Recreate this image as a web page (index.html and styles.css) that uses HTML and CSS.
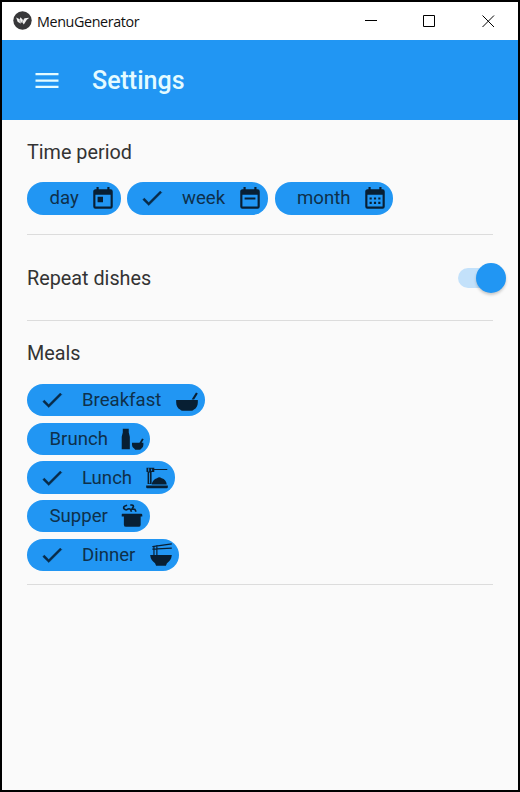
FILE: index.html
```html
<!DOCTYPE html>
<html lang="en">
<head>
<meta charset="utf-8">
<title>MenuGenerator</title>
<link rel="stylesheet" href="styles.css">
</head>
<body>
<svg class="defs" width="0" height="0">
  <symbol id="check" viewBox="0 0 24 24"><path d="M21,7L9,19L3.5,13.5L4.91,12.09L9,16.17L19.59,5.59L21,7Z"/></symbol>
</svg>
<div class="window">
  <div class="titlebar">
    <svg class="logo" viewBox="0 0 19 19"><circle cx="9.5" cy="9.5" r="9.2" fill="#373739"/><path d="M3.2 6.4L6.7 8.3L7.5 6.2L10.2 9.2L11.5 7.2L16.3 6.8L13.8 8.8L10.8 13.4L9.1 10.9L7.4 12.6L4.6 10.7Z" fill="#f2f2f2"/><path d="M6.7 8.3L7.4 12M10.2 9.2L9.1 10.9" stroke="#555" stroke-width=".5"/></svg>
    <span class="app-name">MenuGenerator</span>
    <svg class="controls" width="132" height="14" viewBox="0 0 132 14" fill="none" stroke="#000"><path d="M0 7.5H12"/><path d="M58.5 2.5H69.5V13.5H58.5Z"/><path d="M117.5 2.5L129 14M129 2.5L117.5 14"/></svg>
  </div>
  <header class="toolbar">
    <svg class="menu" viewBox="0 0 24 18"><path d="M0.5 1H23.5V3.3H0.5ZM0.5 7.4H23.5V9.7H0.5ZM0.5 13.7H23.5V16H0.5Z"/></svg>
    <h1>Settings</h1>
  </header>
  <main>
    <section class="period">
      <h2>Time period</h2>
      <div class="row">
        <div class="chip day"><span>day</span><svg class="icon" viewBox="0 0 24 24"><path d="M7,10H12V15H7M19,19H5V8H19M19,3H18V1H16V3H8V1H6V3H5C3.89,3 3,3.9 3,5V19A2,2 0 0,0 5,21H19A2,2 0 0,0 21,19V5A2,2 0 0,0 19,3Z"/></svg></div>
        <div class="chip checked week"><svg class="check"><use href="#check"/></svg><span>week</span><svg class="icon" viewBox="0 0 24 24"><path d="M19,19H5V8H19M19,3H18V1H16V3H8V1H6V3H5C3.89,3 3,3.9 3,5V19A2,2 0 0,0 5,21H19A2,2 0 0,0 21,19V5A2,2 0 0,0 19,3M7,10.500V12.500H17V10.500"/></svg></div>
        <div class="chip month"><span>month</span><svg class="icon" viewBox="0 0 24 24"><path d="M19,19H5V8H19M19,3H18V1H16V3H8V1H6V3H5C3.89,3 3,3.9 3,5V19A2,2 0 0,0 5,21H19A2,2 0 0,0 21,19V5A2,2 0 0,0 19,3Z"/><path d="M7 10.500H9V12.500H7ZM11 10.500H13V12.500H11ZM15 10.500H17V12.500H15ZM7 14.500H9V16.500H7ZM11 14.500H13V16.500H11ZM15 14.500H17V16.500H15Z"/></svg></div>
      </div>
    </section>
    <section class="repeat">
      <h2>Repeat dishes</h2>
      <div class="switch"><div class="thumb"></div></div>
    </section>
    <section class="meals">
      <h2>Meals</h2>
      <div class="list">
        <div class="chip checked breakfast"><svg class="check"><use href="#check"/></svg><span>Breakfast</span><svg class="icon" viewBox="0 0 24 24"><path d="M2 12H22V14C22 17.2 20.6 19.6 18.4 20.8Q17.5 22 16 22H8Q6.500 22 5.600 20.800C3.400 19.600 2 17.200 2 14Z"/><path d="M16.300 11.500L20.300 5.100L22 6.100L18.600 11.500Z"/></svg></div>
        <div class="chip brunch"><span>Brunch</span><svg class="icon" viewBox="0 0 24 24"><path d="M3.500 2.500H9V6L10 10V21.500H2.500V10L3.500 6Z"/><path d="M12 15.500H22.500V17.500Q22.500 20 20.500 21L19.500 22H15L14.200 21Q12 20 12 17.500Z"/><path d="M18.700 16L21.300 11.500L22.800 12.300L20.700 16Z"/></svg></div>
        <div class="chip checked lunch"><svg class="check"><use href="#check"/></svg><span>Lunch</span><svg class="icon" viewBox="0 0 24 24"><path d="M2 19H22V20.500Q22 21.500 21 21.500H3Q2 21.500 2 20.500Z"/><path d="M2.300 2.500H9.500V3.700H21.500V4.700H9.500V6.500H7V17.500H3.300V6.500H2.300Z"/><path d="M7 18Q8 13.500 12 12.300Q14 10.500 16.300 12.300Q20.500 13.500 21 18Z"/><path d="M5.100 7V17M4.300 3V6M7 3.500V5.500" stroke="#2196f3" stroke-width=".8"/></svg></div>
        <div class="chip supper"><span>Supper</span><svg class="icon" viewBox="0 0 24 24"><path d="M3 10H20.500Q21.500 10 21.500 11V12.500H20V20Q20 22 18 22H6.500Q4.500 22 4.500 20V12.500H2.500V11Q2.500 10 3 10Z"/><path d="M7.500 2Q3.500 3 4.500 5.200Q6.500 7.200 8.500 5.500Q10.500 4.500 11.500 8M10.500 2Q13.500 1.500 13.300 3.500L12 5.500L14.500 5.700Q15.500 7 15.500 8" fill="none" stroke="#081f33" stroke-width="1.500"/></svg></div>
        <div class="chip checked dinner"><svg class="check"><use href="#check"/></svg><span>Dinner</span><svg class="icon" viewBox="0 0 24 24"><path d="M2 12H22Q21.500 17 17.500 19.500L16.500 22H7.500L6.500 19.500Q2.500 17 2 12Z"/><path d="M5.500 3.500V13M8.200 3V13M4 4.200L22 1.700M4 6.500L22 5.600" fill="none" stroke="#081f33" stroke-width="1.100"/></svg></div>
      </div>
    </section>
  </main>
</div>
</body>
</html>
```

FILE: styles.css
```css
* { box-sizing: border-box; }
body { margin: 0; font-family: Roboto, sans-serif; }
.defs { position: absolute; }
.window { width: 520px; height: 792px; border: 2px solid #000; background: #fafafa; overflow: hidden; }
.titlebar { height: 38px; background: #fff; display: flex; align-items: center; padding: 0 21px 0 10.500px; }
.logo { width: 19px; height: 19px; margin-top: -1px; }
.app-name { font: 15px "Open Sans", sans-serif; color: #111; letter-spacing: -0.400px; margin: -1px 0 0 5px; line-height: 20px; transform: scaleX(.955); transform-origin: left; }
.controls { margin-left: auto; margin-top: -3px; overflow: visible; }
.toolbar { height: 80px; background: #2196f3; display: flex; align-items: center; padding-left: 33px; }
.menu { width: 24px; height: 18px; margin-top: 1px; fill: #e4fbff; }
h1 { margin: 2px 0 0 33px; font-size: 25px; font-weight: 500; color: #e4fbff; line-height: 30px; }
h2 { margin: 0; font-size: 19.800px; font-weight: 400; line-height: 24px; padding-top: 1px; margin-bottom: -1px; color: #333; }
main { padding: 0 25px; }
section { border-bottom: 1px solid #dcdcdc; }
.period { height: 115px; padding-top: 20px; }
.row { display: flex; gap: 6.500px; margin-top: 18.300px; }
.chip { flex: none; height: 32.400px; border-radius: 16.200px; background: #2196f3; display: flex; align-items: center; padding: 0 5px 0 22.500px; font-size: 18.600px; color: #0e304b; }
.checked { padding-left: 12px; }
.chip span { line-height: 22px; }
.check { width: 26px; height: 26px; margin-right: 17px; fill: #092b48; stroke: #092b48; stroke-width: .4; }
.icon { width: 26px; height: 26px; margin-left: auto; fill: #081f33; }
.period .icon { margin-top: 2px; }
.day { width: 93.500px; }
.week { width: 141px; }
.month { width: 118.500px; }
.repeat { height: 86px; display: flex; align-items: center; justify-content: space-between; }
.switch { width: 36px; height: 20px; border-radius: 10px; background: #c3e1fa; margin-right: -1px; display: flex; align-items: center; }
.thumb { flex: none; width: 30px; height: 30px; border-radius: 50%; background: #2196f3; margin-left: 18px; box-shadow: 0 2px 3px rgba(0,0,0,.2); }
.meals { height: 264px; padding-top: 20px; }
.list { display: flex; flex-direction: column; gap: 6.300px; margin-top: 20px; }
.meals h2 + .list { margin-top: 19px; }
.breakfast { width: 177.500px; }
.brunch, .supper { width: 122.500px; }
.lunch { width: 147.500px; }
.dinner { width: 151.500px; }
```
